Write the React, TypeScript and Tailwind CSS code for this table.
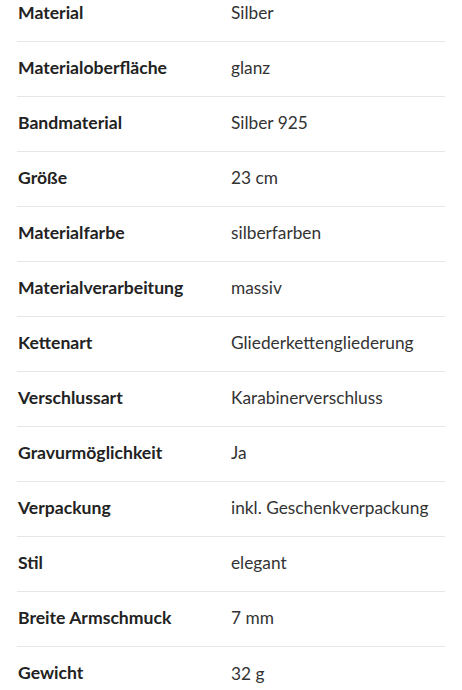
const rows: [string, string][] = [
  ["Material", "Silber"],
  ["Materialoberfläche", "glanz"],
  ["Bandmaterial", "Silber 925"],
  ["Größe", "23 cm"],
  ["Materialfarbe", "silberfarben"],
  ["Materialverarbeitung", "massiv"],
  ["Kettenart", "Gliederkettengliederung"],
  ["Verschlussart", "Karabinerverschluss"],
  ["Gravurmöglichkeit", "Ja"],
  ["Verpackung", "inkl. Geschenkverpackung"],
  ["Stil", "elegant"],
  ["Breite Armschmuck", "7 mm"],
  ["Gewicht", "32 g"],
];

export default function App() {
  return (
    <div className="h-[690px] overflow-hidden bg-white px-[17px] font-['Lato',sans-serif]">
      <dl className="-mt-[13px]">
        {rows.map(([label, value], i) => (
          <div
            key={label}
            className={`flex h-[55px] items-center pb-[2px] ${i < rows.length - 1 ? "border-b border-[#e6e6e6]" : ""}`}
          >
            <dt className="w-[214px] shrink-0 pl-px text-[17.6px] font-bold text-[#222222]">{label}</dt>
            <dd className="text-[17.3px] text-[#333333]">{value}</dd>
          </div>
        ))}
      </dl>
    </div>
  );
}
